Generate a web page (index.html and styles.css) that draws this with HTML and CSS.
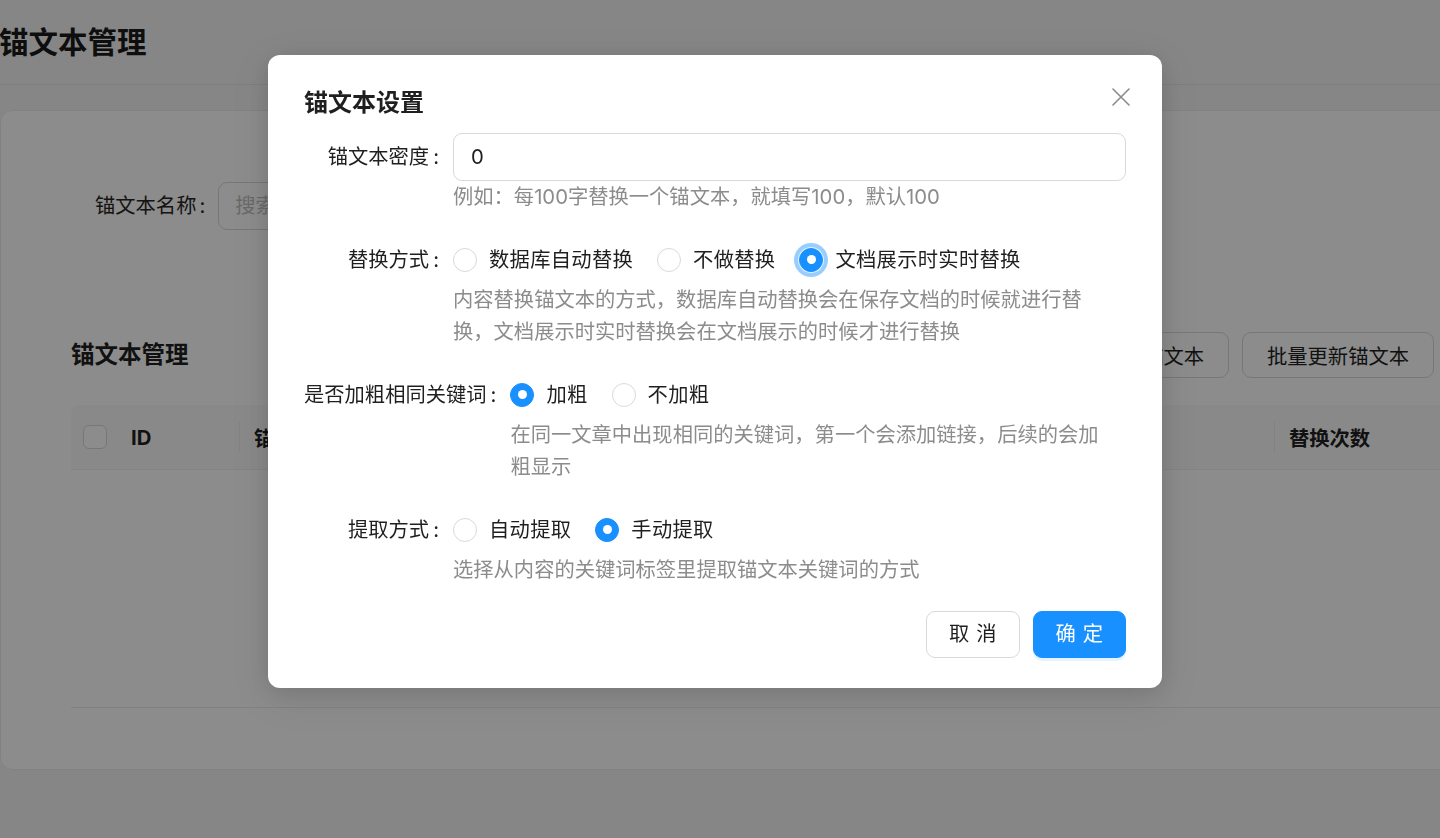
FILE: index.html
```html
<!DOCTYPE html>
<html lang="zh-CN">
<head>
<meta charset="utf-8">
<title>锚文本管理</title>
<link rel="stylesheet" href="styles.css">
</head>
<body>
<div class="page">
  <header class="page-header">
    <h1 class="page-title">锚文本管理</h1>
  </header>
  <section class="card">
    <div class="search-row">
      <span class="search-label">锚文本名称<span class="colon">:</span></span>
      <div class="search-input">搜索锚文本名称</div>
    </div>
    <div class="toolbar">
      <h2 class="section-title">锚文本管理</h2>
      <div class="actions">
        <button class="btn">新增锚文本</button>
        <button class="btn">批量更新锚文本</button>
      </div>
    </div>
    <div class="table">
      <div class="thead">
        <div class="th th-check"><span class="checkbox"></span></div>
        <div class="th th-id">ID</div>
        <div class="th th-name">锚文本名称</div>
        <div class="th th-count">替换次数</div>
      </div>
      <div class="tbody"></div>
    </div>
  </section>
</div>

<div class="mask"></div>
<div class="modal-wrap">
  <div class="modal">
    <button class="modal-close" aria-label="关闭">
      <svg viewBox="0 0 20 20" width="20" height="20"><path d="M2 2 L18 18 M18 2 L2 18" stroke="currentColor" stroke-width="1.6" stroke-linecap="round" fill="none"/></svg>
    </button>
    <div class="modal-title">锚文本设置</div>

    <div class="form-row">
      <div class="form-label">锚文本密度<span class="colon">:</span></div>
      <div class="form-control">
        <div class="input">0</div>
        <div class="extra">例如：每100字替换一个锚文本，就填写100，默认100</div>
      </div>
    </div>

    <div class="form-row">
      <div class="form-label">替换方式<span class="colon">:</span></div>
      <div class="form-control">
        <div class="radio-group">
          <label class="radio"><span class="radio-circle"></span><span class="radio-text">数据库自动替换</span></label>
          <label class="radio"><span class="radio-circle"></span><span class="radio-text">不做替换</span></label>
          <label class="radio"><span class="radio-circle checked focused"></span><span class="radio-text">文档展示时实时替换</span></label>
        </div>
        <div class="extra">内容替换锚文本的方式，数据库自动替换会在保存文档的时候就进行替换，文档展示时实时替换会在文档展示的时候才进行替换</div>
      </div>
    </div>

    <div class="form-row">
      <div class="form-label">是否加粗相同关键词<span class="colon">:</span></div>
      <div class="form-control">
        <div class="radio-group">
          <label class="radio"><span class="radio-circle checked"></span><span class="radio-text">加粗</span></label>
          <label class="radio"><span class="radio-circle"></span><span class="radio-text">不加粗</span></label>
        </div>
        <div class="extra">在同一文章中出现相同的关键词，第一个会添加链接，后续的会加粗显示</div>
      </div>
    </div>

    <div class="form-row">
      <div class="form-label">提取方式<span class="colon">:</span></div>
      <div class="form-control">
        <div class="radio-group">
          <label class="radio"><span class="radio-circle"></span><span class="radio-text">自动提取</span></label>
          <label class="radio"><span class="radio-circle checked"></span><span class="radio-text">手动提取</span></label>
        </div>
        <div class="extra">选择从内容的关键词标签里提取锚文本关键词的方式</div>
      </div>
    </div>

    <div class="modal-footer">
      <button class="mbtn mbtn-default"><span>取消</span></button>
      <button class="mbtn mbtn-primary"><span>确定</span></button>
    </div>
  </div>
</div>
</body>
</html>
```

FILE: styles.css
```css
* { box-sizing: border-box; }

html, body {
  margin: 0;
  padding: 0;
  width: 1440px;
  height: 838px;
  overflow: hidden;
}

body {
  background: #f5f5f5;
  font-family: Inter, "Noto Sans CJK SC", sans-serif;
  font-size: 20.3px;
  color: #1f1f1f;
  text-spacing-trim: space-all;
}

button { font-family: inherit; }

/* ---------- background page ---------- */
.page {
  width: 1440px;
  overflow: hidden;
}

.page-header {
  height: 85px;
  border-bottom: 1px solid #e6e6e6;
  display: flex;
  align-items: center;
}

.page-title {
  margin: 0 0 0 -1px;
  font-size: 29.5px;
  font-weight: 700;
  line-height: 40px;
  color: #1a1a1a;
}

.card {
  margin-top: 25px;
  width: 1520px;
  height: 660px;
  background: #ffffff;
  border: 1px solid #ececec;
  border-radius: 12px;
  padding: 71px 0 0 70px;
}

.search-row {
  display: flex;
  align-items: center;
  height: 48px;
  padding-left: 24px;
}

.search-label {
  color: #262626;
  line-height: 48px;
}

.search-label .colon { margin: 0 13px 0 3px; }

.search-input {
  width: 300px;
  height: 48px;
  border: 1px solid #d9d9d9;
  border-radius: 9px;
  padding: 0 16px;
  line-height: 46px;
  color: #bfbfbf;
}

.toolbar {
  margin-top: 102px;
  width: 1363px;
  height: 46px;
  display: flex;
  align-items: center;
  justify-content: space-between;
}

.section-title {
  margin: 0;
  font-size: 23.5px;
  font-weight: 600;
  color: #1f1f1f;
  line-height: 36px;
}

.actions {
  display: flex;
  gap: 13px;
}

.btn {
  height: 46px;
  padding: 0 24px;
  border: 1px solid #d9d9d9;
  border-radius: 9px;
  background: #fff;
  font-size: 20.3px;
  color: #1f1f1f;
  white-space: nowrap;
}

.table {
  margin-top: 27px;
  width: 1420px;
}

.thead {
  display: flex;
  align-items: center;
  height: 65px;
  background: #fafafa;
  border-bottom: 1px solid #f0f0f0;
  border-radius: 9px 9px 0 0;
  font-weight: 700;
  color: #1f1f1f;
}

.th {
  position: relative;
  height: 100%;
  display: flex;
  align-items: center;
  white-space: nowrap;
}

.th-name::before,
.th-count::before {
  content: "";
  position: absolute;
  left: 0;
  top: 50%;
  width: 1px;
  height: 30px;
  margin-top: -15px;
  background: #ececec;
}

.th-check { width: 60px; padding-left: 12px; }
.th-id { width: 108px; }
.th-name { width: 1035px; padding-left: 15px; }
.th-count { flex: 1; padding-left: 15px; }

.checkbox {
  width: 24px;
  height: 24px;
  border: 1px solid #d9d9d9;
  border-radius: 6px;
  background: #fff;
}

.tbody {
  height: 238px;
  border-bottom: 1px solid #ececec;
}

/* ---------- mask + modal ---------- */
.mask {
  position: fixed;
  inset: 0;
  background: rgba(0, 0, 0, 0.45);
}

.modal-wrap {
  position: fixed;
  inset: 0;
}

.modal {
  position: relative;
  margin: 55px 0 0 268px;
  width: 894px;
  background: #fff;
  border-radius: 12px;
  padding: 30px 36px;
  box-shadow: 0 9px 42px 12px rgba(0, 0, 0, 0.06), 0 4px 24px rgba(0, 0, 0, 0.12);
}

.modal-close {
  position: absolute;
  top: 25px;
  right: 25px;
  width: 33px;
  height: 33px;
  padding: 0;
  border: 0;
  background: transparent;
  color: #8a8a8a;
  display: flex;
  align-items: center;
  justify-content: center;
}

.modal-close svg { width: 20px; height: 20px; }

.modal-title {
  font-size: 24px;
  font-weight: 600;
  line-height: 36px;
  color: #1f1f1f;
  margin-bottom: 12px;
}

.form-row {
  display: flex;
  margin-bottom: 22px;
}

.form-label {
  flex: none;
  min-width: 149px;
  height: 48px;
  line-height: 48px;
  text-align: right;
  white-space: nowrap;
  color: #1f1f1f;
}

.colon {
  margin: 0 14px 0 4px;
}

.form-control {
  flex: 1;
  min-width: 0;
}

.input {
  height: 48px;
  border: 1px solid #d9d9d9;
  border-radius: 9px;
  padding: 0 17px;
  line-height: 46px;
  color: #1f1f1f;
}

.extra {
  color: #8c8c8c;
  line-height: 32.5px;
  padding-right: 8px;
}

.radio-group {
  display: flex;
  align-items: center;
  height: 48px;
}

.radio {
  display: flex;
  align-items: center;
  margin-right: 12px;
}

.radio-circle {
  position: relative;
  width: 24px;
  height: 24px;
  border: 1px solid #d9d9d9;
  border-radius: 50%;
  background: #fff;
  flex: none;
}

.radio-circle.checked {
  background: #1890ff;
  border-color: #1890ff;
}

.radio-circle.checked::after {
  content: "";
  position: absolute;
  left: 50%;
  top: 50%;
  width: 9px;
  height: 9px;
  margin: -4.5px 0 0 -4.5px;
  border-radius: 50%;
  background: #fff;
}

.radio-circle.focused {
  box-shadow: 0 0 0 1px rgba(255, 255, 255, 0.7), 0 0 0 5px rgba(24, 144, 255, 0.45);
}

.radio-text {
  padding: 0 12px;
  color: #1f1f1f;
  line-height: 32px;
  letter-spacing: 0.3px;
}

.modal-footer {
  display: flex;
  justify-content: flex-end;
  gap: 13px;
  margin-top: 25px;
}

.mbtn {
  display: inline-flex;
  align-items: center;
  justify-content: center;
  height: 47px;
  padding: 0 22px;
  border-radius: 9px;
  font-size: 20.3px;
  line-height: 1;
  border: 1px solid #d9d9d9;
  background: #fff;
  color: #1f1f1f;
  white-space: nowrap;
}

.mbtn span {
  letter-spacing: 0.34em;
  margin-right: -0.34em;
}

.mbtn-primary {
  background: #1890ff;
  border-color: #1890ff;
  color: #fff;
  box-shadow: 0 3px 0 rgba(5, 145, 255, 0.1);
}
```
